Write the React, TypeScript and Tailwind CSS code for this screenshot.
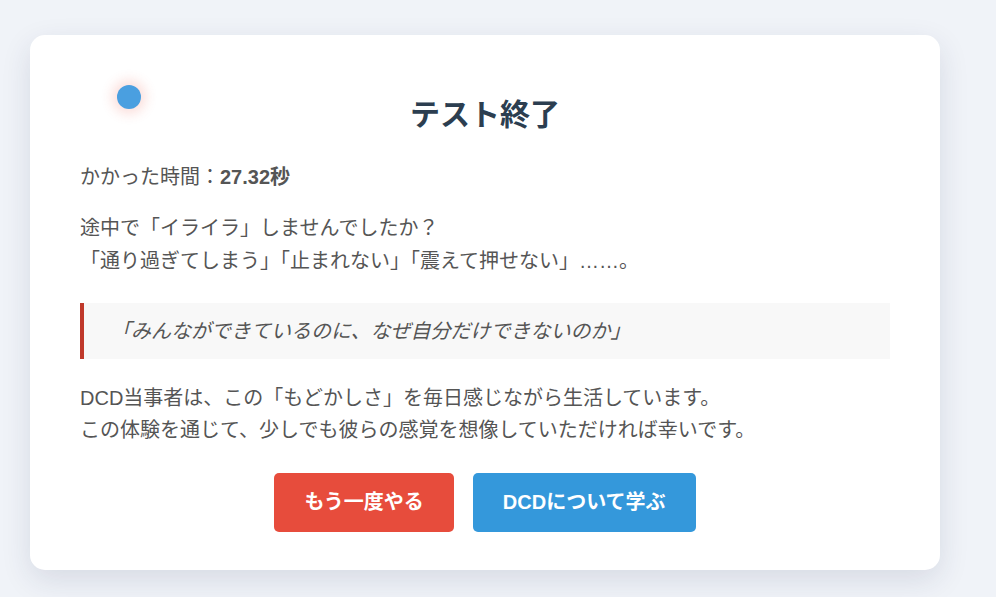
export default function App() {
  return (
    <div
      className="min-h-screen w-full bg-[#f0f3f8] pl-[30px] pt-[35px] pb-[27px]"
      style={{ fontFamily: '"Liberation Sans", "Noto Sans CJK JP", sans-serif' }}
    >
      <div className="relative w-[910px] rounded-[15px] bg-white px-[50px] pt-[62px] pb-[38px] shadow-[0_10px_30px_rgba(30,40,80,0.12)]">
        <div className="absolute left-[87px] top-[50px] h-[24px] w-[24px] rounded-full bg-[#4a9fe0] shadow-[0_0_12px_5px_rgba(231,76,60,0.18)]" />

        <h2 className="mb-[28px] text-center text-[30px] font-bold leading-[36px] text-[#2c3e50]">
          テスト終了
        </h2>

        <p className="mb-[19px] text-[20px] leading-[32px] text-[#555]">
          かかった時間：<strong className="font-bold">27.32秒</strong>
        </p>

        <p className="mb-[26px] text-[20px] leading-[32.5px] text-[#555]">
          途中で「イライラ」しませんでしたか？
          <br />
          「通り過ぎてしまう」「止まれない」「震えて押せない」……。
        </p>

        <blockquote className="mb-[23px] border-l-4 border-[#c0392b] bg-[#f8f8f8] py-[12px] pl-[27px] text-[20px] italic leading-[32px] text-[#555]">
          「みんなができているのに、なぜ自分だけできないのか」
        </blockquote>

        <p className="mb-[27px] text-[20px] leading-[32px] text-[#555]">
          DCD当事者は、この「もどかしさ」を毎日感じながら生活しています。
          <br />
          この体験を通じて、少しでも彼らの感覚を想像していただければ幸いです。
        </p>

        <div className="flex justify-center gap-[19px]">
          <button className="rounded-[5px] bg-[#e74c3c] px-[30px] py-[15px] text-[20px] font-bold leading-[29px] text-white">
            もう一度やる
          </button>
          <button className="rounded-[5px] bg-[#3498db] px-[30px] py-[15px] text-[20px] font-bold leading-[29px] text-white">
            DCDについて学ぶ
          </button>
        </div>
      </div>
    </div>
  );
}
